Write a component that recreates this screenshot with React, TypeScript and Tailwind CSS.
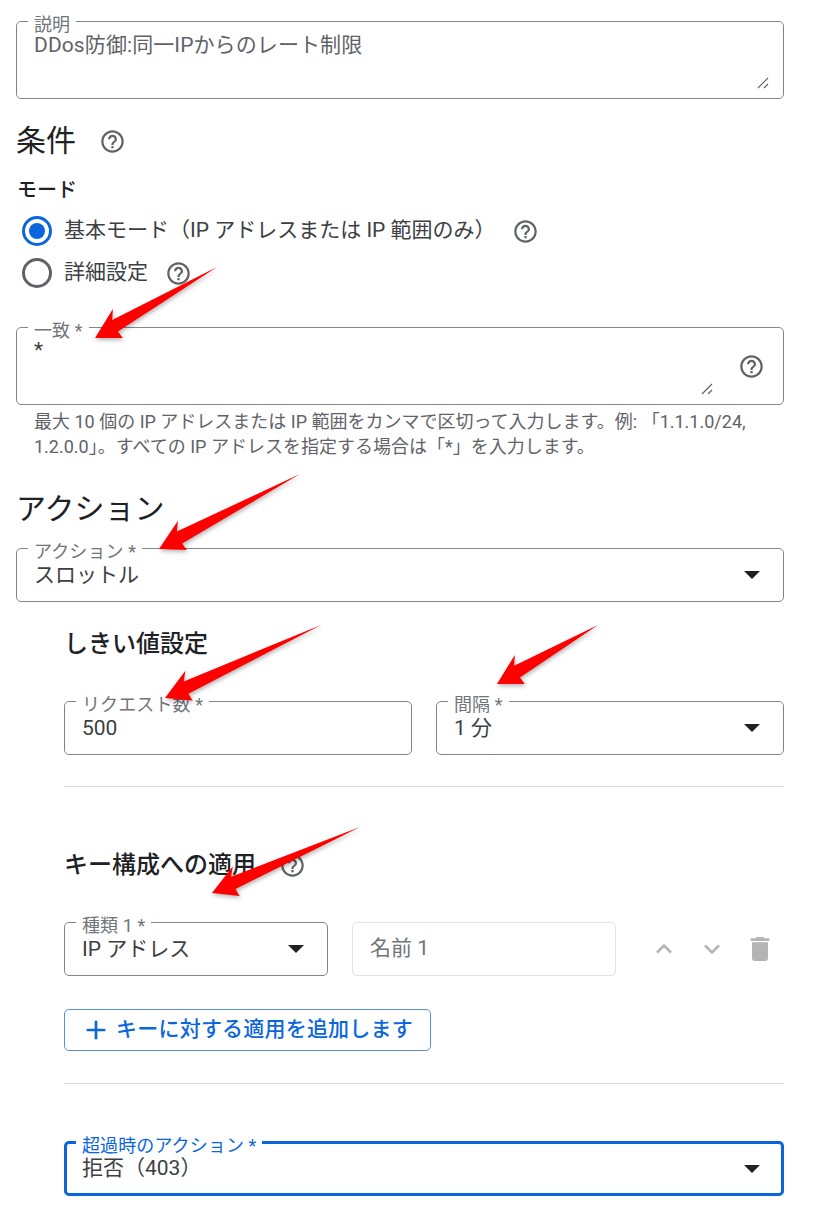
import React from "react";

const font = { fontFamily: '"Roboto", "Noto Sans CJK JP", sans-serif' };

function Help({ className = "" }: { className?: string }) {
  return (
    <svg viewBox="0 0 24 24" className={"w-[27px] h-[27px] shrink-0 " + className} fill="#5f6368">
      <path d="M11 18h2v-2h-2v2zm1-16C6.48 2 2 6.48 2 12s4.48 10 10 10 10-4.48 10-10S17.52 2 12 2zm0 18c-4.41 0-8-3.59-8-8s3.59-8 8-8 8 3.59 8 8-3.59 8-8 8zm0-14c-2.21 0-4 1.79-4 4h2c0-1.1.9-2 2-2s2 .9 2 2c0 2-3 1.75-3 5h2c0-2.25 3-2.5 3-5 0-2.21-1.79-4-4-4z" />
    </svg>
  );
}

function Caret() {
  return (
    <svg viewBox="0 0 16 8" className="w-4 h-2 shrink-0" fill="#202124">
      <path d="M0 0h16L8 8z" />
    </svg>
  );
}

function Grip({ className = "" }: { className?: string }) {
  return (
    <svg viewBox="0 0 12 12" className={"absolute bottom-[9px] w-3 h-3 " + className} stroke="#5f6368" strokeWidth="1.2" fill="none">
      <path d="M1 11 11 1M7 11l4-4" />
    </svg>
  );
}

function Field({
  label,
  children,
  className = "",
  focus = false,
}: {
  label: string;
  children: React.ReactNode;
  className?: string;
  focus?: boolean;
}) {
  return (
    <fieldset
      className={
        "relative rounded-[5px] min-w-0 " +
        (focus ? "border-[3px] border-[#0b66de] px-[15px] " : "border border-[#80868b] px-[17px] ") +
        className
      }
    >
      <legend
        className={
          "ml-[-6px] px-[6px] h-[20px] text-[18px] leading-[20px] " +
          (focus ? "text-[#0b66de]" : "text-[#70757a]")
        }
      >
        <span className="relative top-[4px] tracking-[0.1px]">{label}</span>
      </legend>
      {children}
    </fieldset>
  );
}

function SelectRow({ text, caret = true, focus = false }: { text: string; caret?: boolean; focus?: boolean }) {
  return (
    <div
      className={
        "flex items-center justify-between h-[33px] text-[21px] leading-[33px] text-[#3c4043] " +
        (focus ? "" : "pt-[1px]")
      }
    >
      <span>{text}</span>
      {caret && (
        <span className="mr-[6px] flex">
          <Caret />
        </span>
      )}
    </div>
  );
}

function Radio({ on }: { on?: boolean }) {
  return (
    <span
      className={
        "w-[30px] h-[30px] rounded-full border-[3px] flex items-center justify-center shrink-0 " +
        (on ? "border-[#0b66de]" : "border-[#5f6368]")
      }
    >
      {on && <span className="w-[16px] h-[16px] rounded-full bg-[#0b66de]" />}
    </span>
  );
}

function Arrow({ x1, y1, x2, y2 }: { x1: number; y1: number; x2: number; y2: number }) {
  const dx = x2 - x1;
  const dy = y2 - y1;
  const len = Math.hypot(dx, dy);
  const ux = dx / len;
  const uy = dy / len;
  const nx = -uy;
  const ny = ux;
  const p = (a: number, b: number) => `${x2 - ux * a + nx * b},${y2 - uy * a + ny * b}`;
  const pts = [`${x1},${y1}`, p(24, 7), p(30, 16), `${x2},${y2}`, p(24, -14), p(23, -6)].join(" ");
  return <polygon points={pts} fill="#ff0000" />;
}

export default function App() {
  return (
    <div className="relative w-[834px] h-[1214px] overflow-hidden bg-white" style={font}>
      <div className="pl-4 w-[784px] pt-[11px]">
        <Field label="説明" className="h-[88px]">
          <div className="pt-[1px] text-[21px] leading-[26px] tracking-[0.1px] text-[#5f6368]">DDos防御:同一IPからのレート制限</div>
          <Grip className="right-[14px]" />
        </Field>

        <div className="flex items-center mt-[21px] h-[42px]">
          <h2 className="text-[30px] leading-[42px] text-[#202124]">条件</h2>
          <Help className="ml-[23px]" />
        </div>

        <div className="mt-[15px] text-[20px] leading-[26px] font-medium text-[#202124] pl-[1px]">モード</div>

        <div className="mt-[13px] pl-[6px] flex flex-col gap-[12px] text-[21px] text-[#3c4043]">
          <div className="flex items-center h-[30px]">
            <Radio on />
            <span className="ml-[12px]">基本モード（IP アドレスまたは IP 範囲のみ）</span>
            <Help className="ml-[16px]" />
          </div>
          <div className="flex items-center h-[30px]">
            <Radio />
            <span className="ml-[12px]">詳細設定</span>
            <Help className="ml-[17px]" />
          </div>
        </div>

        <Field label="一致 *" className="h-[88px] mt-[29px]">
          <div className="text-[21px] leading-[26px] text-[#3c4043]">*</div>
          <Help className="absolute right-[18px] top-[16px]" />
          <Grip className="right-[70px]" />
        </Field>

        <p className="ml-[18px] mt-[4px] mr-[30px] text-[18px] leading-[25px] text-[#5f6368]">
          最大 10 個の IP アドレスまたは IP 範囲をカンマで区切って入力します。例: 「1.1.1.0/24,
          1.2.0.0」。すべての IP アドレスを指定する場合は「*」を入力します。
        </p>

        <h2 className="mt-[29px] text-[30px] leading-[42px] text-[#202124]">アクション</h2>

        <Field label="アクション *" className="h-[64px] mt-[8px]">
          <SelectRow text="スロットル" />
        </Field>

        <div className="ml-12">
          <h3 className="mt-[26px] text-[24px] leading-[32px] font-medium text-[#202124]">しきい値設定</h3>

          <div className="grid grid-cols-2 gap-6 mt-[31px]">
            <Field label="リクエスト数 *" className="h-[64px]">
              <SelectRow text="500" caret={false} />
            </Field>
            <Field label="間隔 *" className="h-[64px]">
              <SelectRow text="1 分" />
            </Field>
          </div>

          <div className="h-px bg-[#dadce0] mt-[31px]" />

          <div className="flex items-center mt-[61px] h-[34px]">
            <h3 className="text-[24px] leading-[34px] font-medium text-[#202124]">キー構成への適用</h3>
            <Help className="ml-[23px]" />
          </div>

          <div className="flex items-end gap-6 mt-[30px]">
            <Field label="種類 1 *" className="h-[64px] w-[264px] shrink-0">
              <SelectRow text="IP アドレス" />
            </Field>
            <div className="w-[264px] h-[54px] shrink-0 rounded-[5px] border border-[#e3e3e3] flex items-center px-[17px] text-[21px] text-[#70757a]">
              名前 1
            </div>
            <div className="flex items-center h-[54px] ml-[8px] gap-[16px]">
              <svg viewBox="0 0 24 24" className="w-8 h-8" fill="#b4b4b4">
                <path d="M12 8l-6 6 1.41 1.41L12 10.83l4.59 4.58L18 14z" />
              </svg>
              <svg viewBox="0 0 24 24" className="w-8 h-8" fill="#b4b4b4">
                <path d="M16.59 8.59 12 13.17 7.41 8.59 6 10l6 6 6-6z" />
              </svg>
              <svg viewBox="0 0 24 24" className="w-8 h-8" fill="#b4b4b4">
                <path d="M6 19c0 1.1.9 2 2 2h8c1.1 0 2-.9 2-2V7H6v12zM19 4h-3.5l-1-1h-5l-1 1H5v2h14V4z" />
              </svg>
            </div>
          </div>

          <button className="mt-[33px] w-[367px] h-[42px] rounded-[5px] border border-[#5b8dd6] flex items-center justify-center text-[21px] font-medium text-[#0b66de]">
            <svg viewBox="0 0 24 24" className="w-[32px] h-[32px] -ml-[2px]" fill="#0b66de">
              <path d="M19 13h-6v6h-2v-6H5v-2h6V5h2v6h6v2z" />
            </svg>
            <span className="ml-[4px] tracking-[0.2px]">キーに対する適用を追加します</span>
          </button>

          <div className="h-px bg-[#dadce0] mt-[32px]" />

          <Field label="超過時のアクション *" focus className="h-[64px] mt-[48px]">
            <SelectRow text="拒否（403）" focus />
          </Field>
        </div>
      </div>

      <svg className="absolute inset-0 w-[834px] h-[1214px] pointer-events-none" style={{ filter: "drop-shadow(1px 2px 2px rgba(0,0,0,0.3))" }}>
        <Arrow x1={217} y1={267} x2={95} y2={338} />
        <Arrow x1={300} y1={474} x2={159} y2={549} />
        <Arrow x1={321} y1={625} x2={165} y2={698} />
        <Arrow x1={598} y1={625} x2={497} y2={684} />
        <Arrow x1={360} y1={827} x2={212} y2={893} />
      </svg>
    </div>
  );
}
